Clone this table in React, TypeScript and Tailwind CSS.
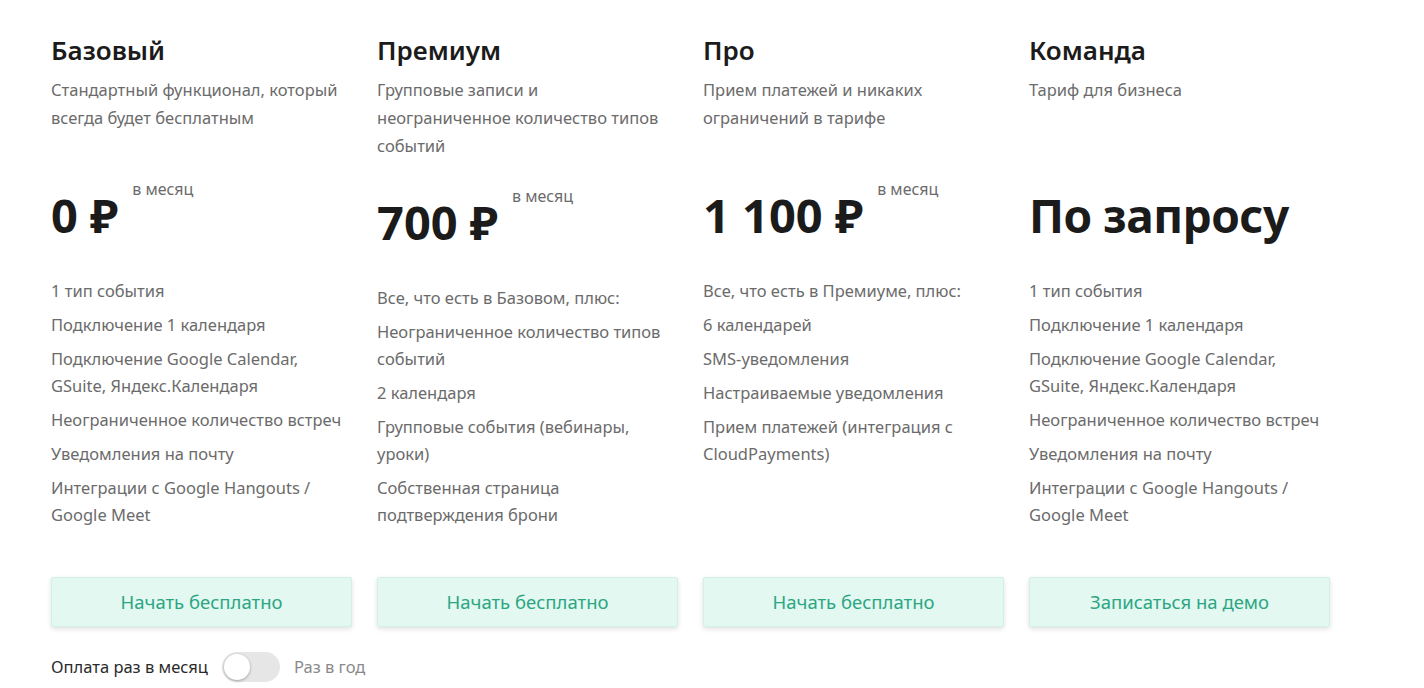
import React from "react";

type Plan = {
  title: string;
  desc: string;
  price: string;
  perMonth: boolean;
  big?: boolean;
  features: string[];
  cta: string;
};

const plans: Plan[] = [
  {
    title: "Базовый",
    desc: "Стандартный функционал, который всегда будет бесплатным",
    price: "0 ₽",
    perMonth: true,
    features: [
      "1 тип события",
      "Подключение 1 календаря",
      "Подключение Google Calendar, GSuite, Яндекс.Календаря",
      "Неограниченное количество встреч",
      "Уведомления на почту",
      "Интеграции с Google Hangouts / Google Meet",
    ],
    cta: "Начать бесплатно",
  },
  {
    title: "Премиум",
    desc: "Групповые записи и неограниченное количество типов событий",
    price: "700 ₽",
    perMonth: true,
    features: [
      "Все, что есть в Базовом, плюс:",
      "Неограниченное количество типов событий",
      "2 календаря",
      "Групповые события (вебинары, уроки)",
      "Собственная страница подтверждения брони",
    ],
    cta: "Начать бесплатно",
  },
  {
    title: "Про",
    desc: "Прием платежей и никаких ограничений в тарифе",
    price: "1 100 ₽",
    perMonth: true,
    features: [
      "Все, что есть в Премиуме, плюс:",
      "6 календарей",
      "SMS-уведомления",
      "Настраиваемые уведомления",
      "Прием платежей (интеграция с CloudPayments)",
    ],
    cta: "Начать бесплатно",
  },
  {
    title: "Команда",
    desc: "Тариф для бизнеса",
    price: "По запросу",
    perMonth: false,
    big: true,
    features: [
      "1 тип события",
      "Подключение 1 календаря",
      "Подключение Google Calendar, GSuite, Яндекс.Календаря",
      "Неограниченное количество встреч",
      "Уведомления на почту",
      "Интеграции с Google Hangouts / Google Meet",
    ],
    cta: "Записаться на демо",
  },
];

function PlanCard({ p }: { p: Plan }) {
  return (
    <div className="flex w-[301px] flex-col">
      <h2 className="text-[26px] font-semibold leading-[32px] text-[#1b1b1b]">{p.title}</h2>
      <p className="mt-[10px] min-h-[77px] max-w-[292px] text-[16.5px] leading-[28px] text-[#6b6b6b]">{p.desc}</p>
      <div className="mt-[30px] flex h-[60px] items-start">
        <span
          className={
            p.big
              ? "mt-[2px] text-[46px] font-bold leading-[60px] tracking-[-0.5px] text-[#1b1b1b]"
              : "mt-[2px] text-[47px] font-bold leading-[60px] text-[#1b1b1b]"
          }
        >
          {p.price}
        </span>
        {p.perMonth && (
          <span className="ml-[14px] mt-[-4px] text-[16px] leading-[20px] text-[#6b6b6b]">в месяц</span>
        )}
      </div>
      <ul className="mt-[34px] flex flex-col gap-[7px]">
        {p.features.map((f) => (
          <li key={f} className="text-[16.5px] leading-[27px] text-[#6b6b6b]">
            {f}
          </li>
        ))}
      </ul>
      <button className="mt-auto h-[50px] w-full rounded-[2px] border border-[#d3f0e6] bg-[#e3f8f1] text-[18.5px] text-[#2ba683] shadow-[0_2px_5px_rgba(0,0,0,0.12)]">
        {p.cta}
      </button>
    </div>
  );
}

export default function App() {
  return (
    <div
      className="min-h-[688px] w-full bg-white pl-[51px] pt-[34px]"
      style={{ fontFamily: '"Noto Sans", "Open Sans", sans-serif' }}
    >
      <div className="flex h-[593px] gap-[25px]">
        {plans.map((p) => (
          <PlanCard key={p.title} p={p} />
        ))}
      </div>
      <div className="mt-[25px] flex items-center">
        <span className="text-[16.5px] text-[#2a2a2a]">Оплата раз в месяц</span>
        <div className="ml-[14px] flex h-[30px] w-[58px] items-center rounded-full bg-[#e6e6e6] px-[2px]">
          <div className="h-[26px] w-[26px] rounded-full bg-white shadow-[0_1px_3px_rgba(0,0,0,0.3)]" />
        </div>
        <span className="ml-[14px] text-[16.5px] text-[#8a8a8a]">Раз в год</span>
      </div>
    </div>
  );
}
